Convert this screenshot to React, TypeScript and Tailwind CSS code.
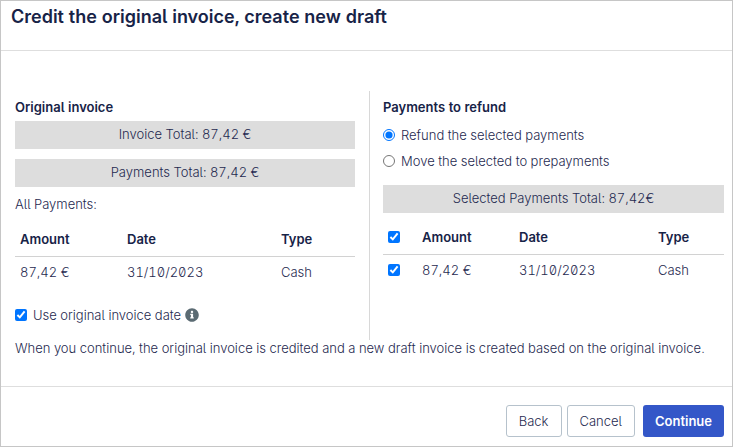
import { useState } from "react";

const payments = [{ amount: "87,42 €", date: "31/10/2023", type: "Cash" }];

function TotalBar({ children }: { children: string }) {
  return <div className="flex h-7 items-center justify-center bg-[#dddddd] px-2 pb-0.5">{children}</div>;
}

function InfoIcon() {
  return (
    <svg viewBox="0 0 512 512" className="size-3.5 text-[#5b6b73]" fill="currentColor" role="img" aria-label="Info">
      <path d="M256 8C119 8 8 119 8 256s111 248 248 248 248-111 248-248S393 8 256 8zm0 96c24 0 44 19 44 43s-20 43-44 43-44-19-44-43 20-43 44-43zm64 272c0 7-5 12-12 12H204c-7 0-12-5-12-12v-28c0-7 5-12 12-12h12v-76h-12c-7 0-12-5-12-12v-28c0-7 5-12 12-12h80c7 0 12 5 12 12v116h12c7 0 12 5 12 12z" />
    </svg>
  );
}

const box = "block size-[12px] accent-[#0075ff]";
const head = "px-[5px] h-[34px] text-left font-semibold text-[#172347]";
const cell = "px-[5px] h-[32px]";

export default function App() {
  const [mode, setMode] = useState("refund");
  const [selected, setSelected] = useState(true);
  const [keepDate, setKeepDate] = useState(true);

  return (
    <main className="border border-[#c6c6c6] bg-white font-['Inter',sans-serif] text-[13px] leading-5 font-light text-[#1f2a50] [font-feature-settings:'cv05','tnum','zero']">
      <header className="border-b border-[#dedede] px-2.5 pt-1 pb-[21px]">
        <h1 className="text-[18px] leading-6 font-semibold text-[#172347]">Credit the original invoice, create new draft</h1>
      </header>

      <div className="pt-10 pr-2 pb-[30px] pl-3.5">
        <div className="grid grid-cols-[354fr_355fr]">
          <section className="pt-1.5 pr-3.5">
            <h2 className="mb-1 font-semibold text-[#172347]">Original invoice</h2>
            <div className="flex flex-col gap-2.5">
              <TotalBar>Invoice Total: 87,42 €</TotalBar>
              <TotalBar>Payments Total: 87,42 €</TotalBar>
            </div>
            <p className="mt-[7px]">All Payments:</p>
            <table className="mt-2 w-full table-fixed border-collapse">
              <colgroup>
                <col className="w-[107px]" />
                <col className="w-[154px]" />
                <col className="w-[79px]" />
              </colgroup>
              <thead>
                <tr className="border-b border-[#d2d2d2]">
                  <th className={head}>Amount</th>
                  <th className={head}>Date</th>
                  <th className={head}>Type</th>
                </tr>
              </thead>
              <tbody>
                {payments.map((p) => (
                  <tr key={p.date}>
                    <td className={cell}>{p.amount}</td>
                    <td className={cell}>{p.date}</td>
                    <td className={cell}>{p.type}</td>
                  </tr>
                ))}
              </tbody>
            </table>
            <div className="mt-[17px] flex items-center">
              <label className="flex items-center gap-1.5">
                <input type="checkbox" className={box} checked={keepDate} onChange={() => setKeepDate(!keepDate)} />
                Use original invoice date
              </label>
              <span className="ml-1">
                <InfoIcon />
              </span>
            </div>
          </section>

          <section className="border-l border-[#d8d8d8] pt-1.5 pb-[54px] pl-[13px]">
            <h2 className="font-semibold text-[#172347]">Payments to refund</h2>
            <div className="mt-2 mb-3.5 flex flex-col gap-1.5" role="radiogroup" aria-label="Payments to refund">
              <label className="flex items-center gap-1.5">
                <input type="radio" name="mode" className="size-[12px] accent-[#0075ff]" checked={mode === "refund"} onChange={() => setMode("refund")} />
                Refund the selected payments
              </label>
              <label className="flex items-center gap-1.5">
                <input type="radio" name="mode" className="size-[12px] accent-[#0075ff]" checked={mode === "move"} onChange={() => setMode("move")} />
                Move the selected to prepayments
              </label>
            </div>
            <TotalBar>Selected Payments Total: 87,42€</TotalBar>
            <table className="mt-[7px] w-full table-fixed border-collapse">
              <colgroup>
                <col className="w-[34px]" />
                <col className="w-[97px]" />
                <col className="w-[139px]" />
                <col className="w-[71px]" />
              </colgroup>
              <thead>
                <tr className="border-b border-[#d2d2d2]">
                  <th className={head}>
                    <input type="checkbox" aria-label="Select all" className={box} checked={selected} onChange={() => setSelected(!selected)} />
                  </th>
                  <th className={head}>Amount</th>
                  <th className={head}>Date</th>
                  <th className={head}>Type</th>
                </tr>
              </thead>
              <tbody>
                {payments.map((p) => (
                  <tr key={p.date}>
                    <td className={cell}>
                      <input type="checkbox" aria-label={p.amount} className={box} checked={selected} onChange={() => setSelected(!selected)} />
                    </td>
                    <td className={cell}>{p.amount}</td>
                    <td className={cell}>{p.date}</td>
                    <td className={cell}>{p.type}</td>
                  </tr>
                ))}
              </tbody>
            </table>
          </section>
        </div>
        <p className="leading-4">When you continue, the original invoice is credited and a new draft invoice is created based on the original invoice.</p>
      </div>

      <footer className="flex justify-end border-t border-[#dedede] pt-[18px] pr-2 pb-[9px]">
        <button className="h-8 rounded-[3px] border border-[#b6c2cc] px-3">Back</button>
        <button className="ml-[5px] h-8 rounded-[3px] border border-[#b6c2cc] px-3">Cancel</button>
        <button className="ml-2 h-8 rounded-[3px] bg-[#3457c8] px-3 font-semibold text-white">Continue</button>
      </footer>
    </main>
  );
}
